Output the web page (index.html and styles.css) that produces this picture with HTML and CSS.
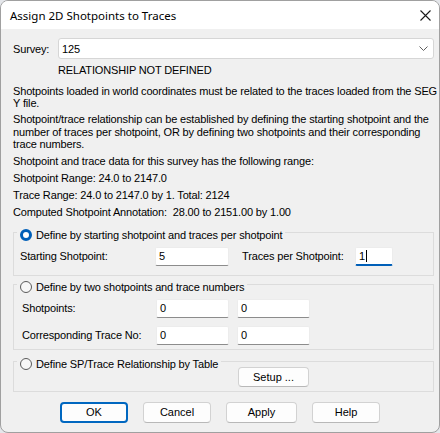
FILE: index.html
```html
<!DOCTYPE html>
<html>
<head>
<meta charset="utf-8">
<link rel="stylesheet" href="styles.css">
</head>
<body>
<div class="window">
  <div class="titlebar">
    <span class="title">Assign 2D Shotpoints to Traces</span>
    <svg class="close" width="11" height="11" viewBox="0 0 11 11"><path d="M0.5 0.5 L10.5 10.5 M10.5 0.5 L0.5 10.5" stroke="#1a1a1a" stroke-width="1.1" fill="none"/></svg>
  </div>
  <div class="client">
    <div class="survey-row">
      <span class="survey-label">Survey:</span>
      <div class="combo">
        <span>125</span>
        <svg width="9" height="5" viewBox="0 0 9 5"><path d="M0.5 0.5 L4.5 4.5 L8.5 0.5" stroke="#606060" stroke-width="1" fill="none"/></svg>
      </div>
    </div>
    <div class="status">RELATIONSHIP NOT DEFINED</div>
    <p class="p1">Shotpoints loaded in world coordinates must be related to the traces loaded from the SEG<br>Y file.</p>
    <p class="p2">Shotpoint/trace relationship can be established by defining the starting shotpoint and the<br>number of traces per shotpoint, OR by defining two shotpoints and their corresponding<br>trace numbers.</p>
    <div class="info">Shotpoint and trace data for this survey has the following range:</div>
    <div class="info">Shotpoint Range: 24.0 to 2147.0</div>
    <div class="info">Trace Range: 24.0 to 2147.0 by 1. Total: 2124</div>
    <div class="info">Computed Shotpoint Annotation:&nbsp; 28.00 to 2151.00 by 1.00</div>

    <fieldset class="group g1">
      <legend><span class="radio on"></span>Define by starting shotpoint and traces per shotpoint</legend>
      <div class="row r1">
        <span class="lbl l1">Starting Shotpoint:</span>
        <div class="edit w74">5</div>
        <span class="lbl l2">Traces per Shotpoint:</span>
        <div class="edit w38 focus">1<span class="caret"></span></div>
      </div>
    </fieldset>

    <fieldset class="group g2">
      <legend><span class="radio"></span>Define by two shotpoints and trace numbers</legend>
      <div class="row r2">
        <span class="lbl l3">Shotpoints:</span>
        <div class="edit w73">0</div>
        <div class="edit w73">0</div>
      </div>
      <div class="row r2 second">
        <span class="lbl l3">Corresponding Trace No:</span>
        <div class="edit w73">0</div>
        <div class="edit w73">0</div>
      </div>
    </fieldset>

    <fieldset class="group g3">
      <legend><span class="radio"></span>Define SP/Trace Relationship by Table</legend>
      <div class="row r3">
        <button class="btn setup">Setup ...</button>
      </div>
    </fieldset>

    <div class="buttons">
      <button class="btn default">OK</button>
      <button class="btn">Cancel</button>
      <button class="btn wide">Apply</button>
      <button class="btn">Help</button>
    </div>
  </div>
</div>
</body>
</html>
```
FILE: styles.css
```css
* { box-sizing: border-box; }
html, body { margin: 0; padding: 0; }
body {
  background: #e4e6ea;
  width: 440px;
  height: 433px;
  overflow: hidden;
  font-family: "Liberation Sans", Arial, sans-serif;
  font-size: 11px;
  letter-spacing: -0.15px;
  color: #000;
}
.window {
  width: 440px;
  height: 433px;
  border: 1px solid #a0a0a0;
  border-radius: 8px;
  overflow: hidden;
  background: #f0f0f0;
  display: flex;
  flex-direction: column;
}
.titlebar {
  height: 28px;
  flex: none;
  background: #fff;
  display: flex;
  align-items: center;
  justify-content: space-between;
  padding: 0 8px 0 9px;
}
.title {
  font-family: "Noto Sans", sans-serif;
  font-size: 11.5px;
  letter-spacing: 0;
  color: #000;
}
.close { display: block; }
.client {
  padding: 9px 5px 0 12px;
  display: flex;
  flex-direction: column;
}
.survey-row {
  display: flex;
  align-items: center;
  height: 21px;
}
.survey-label { width: 45px; }
.combo {
  flex: 1;
  height: 21px;
  background: #fff;
  border: 1px solid #d6d6d6;
  border-radius: 3px;
  display: flex;
  align-items: center;
  justify-content: space-between;
  padding: 0 5px 0 3px;
}
.combo svg { display: block; }
.status {
  margin: 5px 0 0 45px;
  line-height: 13px;
}
p { margin: 0; white-space: nowrap; }
.p1 { margin-top: 8px; line-height: 12px; }
.p2 { margin-top: 4px; line-height: 12.5px; }
.info { line-height: 13px; margin-top: 4px; white-space: nowrap; }

.group {
  margin: 0;
  padding: 0;
  border: 1px solid #dcdcdc;
  min-width: 0;
}
.group legend {
  display: flex;
  align-items: center;
  padding: 5px 3px 0 3px;
  margin-left: 3px;
  line-height: 12px;
}
.radio {
  width: 12px;
  height: 12px;
  border-radius: 50%;
  border: 1px solid #5a5a5a;
  background: #f7f7f7;
  margin-right: 4px;
  flex: none;
}
.radio.on {
  border: 3.5px solid #005fb8;
  background: #fff;
}
.g1 { margin-top: 5px; padding-bottom: 9px; }
.g2 { margin-top: 0; padding-bottom: 4px; }
.g3 { margin-top: 3px; padding-bottom: 4px; }

.row { display: flex; align-items: center; }
.r1 { margin-top: 6px; padding-left: 6px; }
.r2 { margin-top: 6px; padding-left: 8px; }
.r2.second { margin-top: 8px; }
.r3 { margin-top: -3px; padding-left: 224px; }
.lbl { white-space: nowrap; }
.l1 { width: 135px; }
.l2 { width: 113px; margin-left: 13px; }
.l3 { width: 134px; }
.r2 .edit + .edit { margin-left: 8px; }

.edit {
  height: 19px;
  background: #fff;
  border: 1px solid #ececec;
  border-bottom: 1px solid #8c8c8c;
  border-radius: 2px;
  padding-left: 3px;
  display: flex;
  align-items: center;
  line-height: 13px;
}
.w74 { width: 74px; }
.w73 { width: 73px; }
.w38 { width: 38px; }
.edit.focus {
  border-bottom: 2px solid #005fb8;
  padding-top: 1px;
}
.caret {
  display: inline-block;
  width: 1px;
  height: 12px;
  background: #000;
  margin-left: 1px;
}

.btn {
  font-family: "Liberation Sans", Arial, sans-serif;
  font-size: 11px;
  letter-spacing: 0;
  color: #000;
  background: #fdfdfd;
  border: 1px solid #d2d2d2;
  border-bottom-color: #b8b8b8;
  border-radius: 4px;
  height: 21px;
  width: 68px;
  padding: 0;
  margin: 0;
}
.btn.setup { width: 71px; height: 20px; }
.btn.wide { width: 71px; }
.btn.default {
  border: 2px solid #0067c0;
}
.buttons {
  display: flex;
  gap: 15px;
  margin-top: 10px;
  padding-left: 47px;
}
```
